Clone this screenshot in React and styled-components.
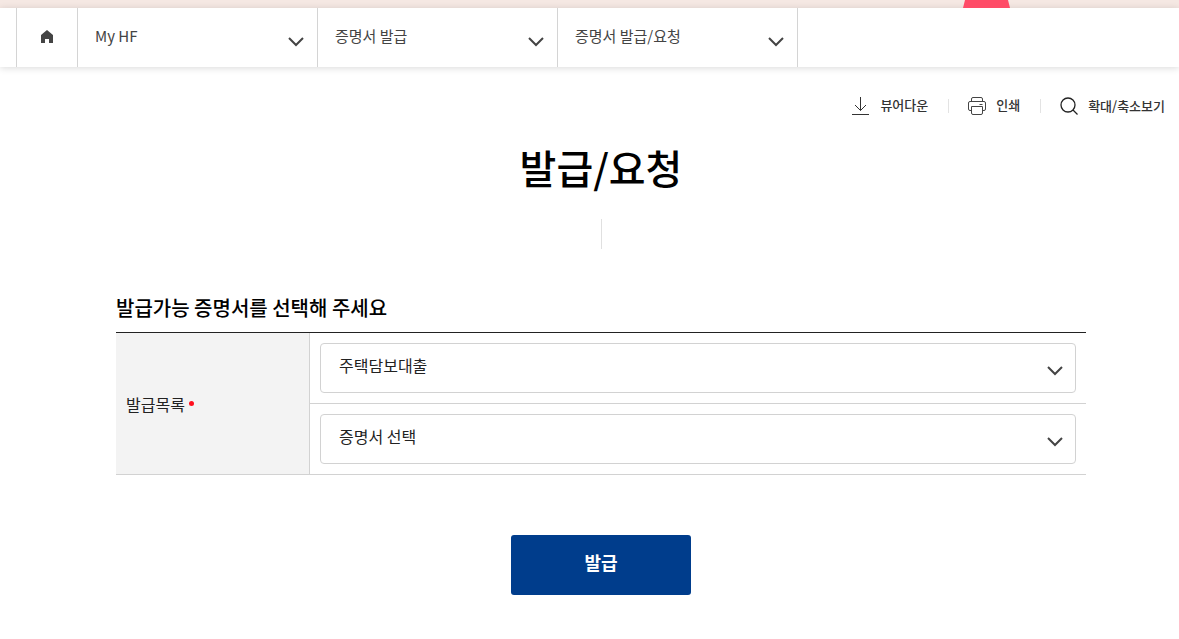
import React from 'react';
import styled, { createGlobalStyle } from 'styled-components';

const GlobalStyle = createGlobalStyle`
  *, *::before, *::after { box-sizing: border-box; }
  body {
    margin: 0;
    background: #fff;
    color: #222;
    font-family: "Noto Sans CJK KR", "Noto Sans", sans-serif;
    font-size: 16px;
    overflow-x: hidden;
  }
  button, select { font-family: inherit; }
`;

const TopStrip = styled.div`
  display: flex;
  justify-content: flex-end;
  height: 8px;
  padding-right: 169px;
  background: #f5e8e3;
`;

const Ribbon = styled.svg`
  display: block;
  width: 47px;
  height: 8px;
`;

const Breadcrumb = styled.nav`
  display: flex;
  height: 59px;
  padding-left: 16px;
  background: #fff;
  box-shadow: 0 1px 7px rgba(0, 0, 0, 0.15);
`;

const HomeLink = styled.a`
  display: flex;
  align-items: center;
  justify-content: center;
  width: 61px;
  padding-bottom: 2px;
  border-left: 1px solid #d4d4d4;
  color: #444;
`;

const CrumbButton = styled.button`
  display: flex;
  justify-content: space-between;
  align-items: center;
  width: 240px;
  padding: 0 13px 4px 17px;
  border: 0;
  border-left: 1px solid #d4d4d4;
  background: none;
  color: #444;
  font-size: 15px;
  line-height: 22px;
  cursor: pointer;

  &:last-child {
    width: 241px;
    border-right: 1px solid #d4d4d4;
  }

  svg { margin-top: 12px; }
`;

const Tools = styled.div`
  display: flex;
  justify-content: flex-end;
  align-items: center;
  height: 20px;
  margin-top: 29px;
  padding-right: 14px;
`;

const ToolButton = styled.button`
  display: flex;
  align-items: center;
  gap: 10px;
  padding: 0;
  border: 0;
  background: none;
  color: #333;
  font-size: 13px;
  font-weight: 500;
  line-height: 20px;
  cursor: pointer;

  span { padding-bottom: ${(p) => p.$lift || 0}px; }
`;

const ToolDivider = styled.i`
  width: 1px;
  height: 14px;
  margin: 0 19px 0 20px;
  background: #e3e3e3;
`;

const Main = styled.main`
  padding: 0 93px 44px 116px;
`;

const Title = styled.h1`
  margin: 21px 0 0;
  color: #000;
  font-size: 40px;
  font-weight: 500;
  line-height: 60px;
  text-align: center;
`;

const TitleRule = styled.div`
  width: 1px;
  height: 30px;
  margin: 22px auto 0;
  background: #e0e0e0;
`;

const SectionTitle = styled.h2`
  margin: 44px 0 0;
  padding-bottom: 9px;
  color: #000;
  font-size: 20px;
  font-weight: 500;
  line-height: 30px;
`;

const FormTable = styled.table`
  width: 100%;
  border-spacing: 0;
  border-top: 1px solid #222;
`;

const LabelCell = styled.th`
  width: 194px;
  padding: 0 10px;
  border-right: 1px solid #d2d2d2;
  border-bottom: 1px solid #d2d2d2;
  background: #f3f3f3;
  font-weight: 400;
  line-height: 24px;
  text-align: left;
`;

const Required = styled.i`
  display: inline-block;
  width: 5px;
  height: 5px;
  margin-left: 4px;
  border-radius: 50%;
  background: #ff0f1e;
  vertical-align: 5px;
`;

const FieldCell = styled.td`
  padding: 10px;
  border-bottom: 1px solid #d2d2d2;
`;

const SelectBox = styled.div`
  position: relative;

  svg {
    position: absolute;
    top: 23px;
    right: 13px;
    pointer-events: none;
  }
`;

const Select = styled.select`
  display: block;
  width: 100%;
  height: 50px;
  padding: 0 40px 6px 18px;
  border: 1px solid #d2d2d2;
  border-radius: 4px;
  appearance: none;
  background: #fff;
  color: #222;
  font-size: 16px;
`;

const Actions = styled.div`
  display: flex;
  justify-content: center;
  padding-top: 60px;
`;

const SubmitButton = styled.button`
  width: 180px;
  height: 60px;
  padding: 0 0 6px;
  border: 0;
  border-radius: 3px;
  background: #003d8c;
  color: #fff;
  font-size: 18px;
  font-weight: 700;
  cursor: pointer;
`;

function Chevron() {
  return (
    <svg width="16" height="10" viewBox="0 0 16 10" fill="none" stroke="#444" strokeWidth="2" aria-hidden="true">
      <path d="M1 1l7 7 7-7" />
    </svg>
  );
}

function HomeIcon() {
  return (
    <svg width="12" height="13" viewBox="0 0 12 13" fill="currentColor" aria-hidden="true">
      <path d="M6 0L0 5v8h4V9h4v4h4V5z" />
    </svg>
  );
}

function DownloadIcon() {
  return (
    <svg width="18" height="18" viewBox="0 0 18 18" fill="none" stroke="#333" aria-hidden="true">
      <path d="M8.500 0v13.500M3 8l5.500 5.500L14 8M0 17.500h17" />
    </svg>
  );
}

function PrinterIcon() {
  return (
    <svg width="18" height="18" viewBox="0 0 18 18" fill="none" stroke="#444" aria-hidden="true">
      <path d="M3.500 4V2q0-1.500 1.500-1.500h8q1.500 0 1.500 1.500v2" />
      <path d="M3.500 13.500H2Q.500 13.500.500 12V6Q.500 4.500 2 4.500h14q1.500 0 1.500 1.500v6q0 1.500-1.500 1.500h-1.500M11.500 7.500h3" />
      <path d="M3.500 9.500h11V16q0 1.500-1.500 1.500H5q-1.500 0-1.500-1.500z" />
    </svg>
  );
}

function SearchIcon() {
  return (
    <svg width="18" height="18" viewBox="0 0 18 18" fill="none" stroke="#222" strokeWidth="1.3" aria-hidden="true">
      <circle cx="8" cy="8" r="7" />
      <path d="M13 13l4.500 4.500" />
    </svg>
  );
}

const crumbs = ['My HF', '증명서 발급', '증명서 발급/요청'];

export default function App() {
  return (
    <>
      <GlobalStyle />
      <TopStrip>
        <Ribbon viewBox="0 0 47 8" aria-hidden="true">
          <path d="M2 0h43l2 8H0z" fill="#ff4b67" />
        </Ribbon>
      </TopStrip>
      <Breadcrumb>
        <HomeLink href="#" aria-label="홈">
          <HomeIcon />
        </HomeLink>
        {crumbs.map((label) => (
          <CrumbButton key={label} type="button">
            {label}
            <Chevron />
          </CrumbButton>
        ))}
      </Breadcrumb>
      <Tools>
        <ToolButton type="button" $lift={3}>
          <DownloadIcon />
          <span>뷰어다운</span>
        </ToolButton>
        <ToolDivider />
        <ToolButton type="button" $lift={3}>
          <PrinterIcon />
          <span>인쇄</span>
        </ToolButton>
        <ToolDivider />
        <ToolButton type="button">
          <SearchIcon />
          <span>확대/축소보기</span>
        </ToolButton>
      </Tools>
      <Main>
        <Title>발급/요청</Title>
        <TitleRule />
        <SectionTitle>발급가능 증명서를 선택해 주세요</SectionTitle>
        <form onSubmit={(e) => e.preventDefault()}>
          <FormTable>
            <tbody>
              <tr>
                <LabelCell scope="row" rowSpan={2}>
                  <label htmlFor="loan-type">발급목록</label>
                  <Required />
                </LabelCell>
                <FieldCell>
                  <SelectBox>
                    <Select id="loan-type">
                      <option>주택담보대출</option>
                    </Select>
                    <Chevron />
                  </SelectBox>
                </FieldCell>
              </tr>
              <tr>
                <FieldCell>
                  <SelectBox>
                    <Select aria-label="증명서 선택">
                      <option>증명서 선택</option>
                    </Select>
                    <Chevron />
                  </SelectBox>
                </FieldCell>
              </tr>
            </tbody>
          </FormTable>
          <Actions>
            <SubmitButton type="submit">발급</SubmitButton>
          </Actions>
        </form>
      </Main>
    </>
  );
}
